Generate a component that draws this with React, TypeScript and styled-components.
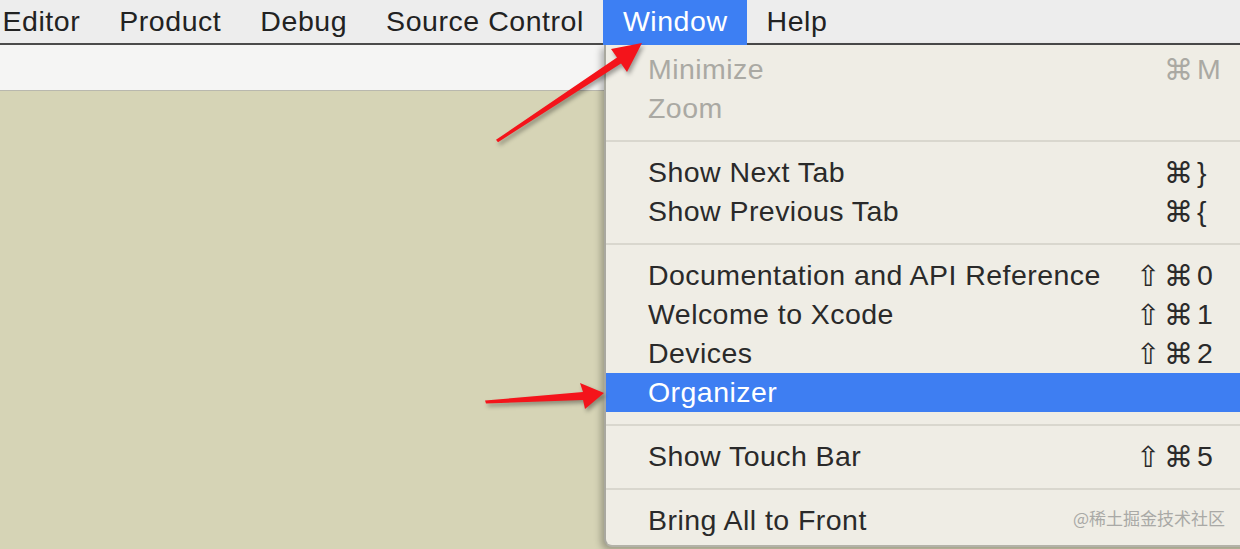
import React from "react";
import styled, { createGlobalStyle } from "styled-components";

const GlobalStyle = createGlobalStyle`
  html, body { margin: 0; padding: 0; background: #d6d4b6; overflow: hidden; }
  * { box-sizing: border-box; }
`;

const FONT = `"Liberation Sans", Arial, Helvetica, sans-serif`;

const Screen = styled.div`
  position: relative;
  width: 1240px;
  height: 549px;
  overflow: hidden;
  display: flex;
  flex-direction: column;
  font-family: ${FONT};
  background: #d6d4b6;
`;

const MenuBar = styled.div`
  height: 45px;
  flex: none;
  display: flex;
  align-items: stretch;
  background: #ededed;
  border-bottom: 2px solid #4b4b4b;
`;

const TitleList = styled.div`
  display: flex;
  margin-left: -17px;
`;

const MenuTitle = styled.div<{ $active?: boolean }>`
  padding: 0 19.5px;
  height: ${(p) => (p.$active ? "45px" : "43px")};
  margin-bottom: ${(p) => (p.$active ? "-2px" : "0")};
  line-height: 42px;
  font-size: 28.5px;
  letter-spacing: 0.55px;
  color: ${(p) => (p.$active ? "#ffffff" : "#222222")};
  background: ${(p) => (p.$active ? "#3d7ff3" : "transparent")};
  position: relative;
  z-index: 2;
  white-space: nowrap;
`;

const Toolbar = styled.div`
  height: 46px;
  flex: none;
  background: #f5f5f4;
  border-bottom: 1px solid #b9b8ae;
`;

const Canvas = styled.div`
  flex: 1;
  background: #d6d4b6;
`;

const Dropdown = styled.div`
  position: absolute;
  left: 604px;
  top: 45px;
  right: -10px;
  bottom: 2px;
  background: #efede5;
  border-left: 2px solid #a9a89f;
  border-bottom: 2px solid #b3b2a8;
  border-bottom-left-radius: 8px;
  box-shadow: -3px 3px 7px rgba(0, 0, 0, 0.28);
  padding: 5px 0 9px;
  display: flex;
  flex-direction: column;
  z-index: 1;
`;

const Item = styled.div<{ $disabled?: boolean; $selected?: boolean }>`
  height: 39px;
  flex: none;
  display: flex;
  align-items: center;
  justify-content: space-between;
  padding: 0 26px 0 42px;
  font-size: 28.5px;
  white-space: nowrap;
  color: ${(p) => (p.$selected ? "#ffffff" : p.$disabled ? "#aaa9a3" : "#2a2a2a")};
  background: ${(p) => (p.$selected ? "#3e7ef2" : "transparent")};
`;

const Label = styled.span`
  letter-spacing: 0.45px;
`;

const Separator = styled.div`
  height: 25px;
  flex: none;
  display: flex;
  align-items: center;
  &::after {
    content: "";
    flex: 1;
    height: 2px;
    background: #d9d7ce;
  }
`;

const Shortcut = styled.span`
  display: flex;
  align-items: center;
`;

const Mods = styled.span`
  text-align: right;
  letter-spacing: 4px;
  font-size: 29px;
`;

const Key = styled.span`
  width: 27px;
  text-align: left;
  padding-left: 0;
`;

const Watermark = styled.div`
  position: absolute;
  right: 15px;
  bottom: 19px;
  font-family: "Noto Sans CJK SC", ${FONT};
  font-size: 17px;
  color: #a9a9a6;
  z-index: 3;
`;

const Overlay = styled.svg`
  position: absolute;
  left: 0;
  top: 0;
  width: 1240px;
  height: 549px;
  pointer-events: none;
  z-index: 4;
  filter: drop-shadow(2px 3px 2px rgba(0, 0, 0, 0.35));
`;

type Entry =
  | { kind: "sep" }
  | { kind: "item"; label: string; mods?: string; key?: string; disabled?: boolean; selected?: boolean };

const entries: Entry[] = [
  { kind: "item", label: "Minimize", mods: "⌘", key: "M", disabled: true },
  { kind: "item", label: "Zoom", disabled: true },
  { kind: "sep" },
  { kind: "item", label: "Show Next Tab", mods: "⌘", key: "}" },
  { kind: "item", label: "Show Previous Tab", mods: "⌘", key: "{" },
  { kind: "sep" },
  { kind: "item", label: "Documentation and API Reference", mods: "⇧⌘", key: "0" },
  { kind: "item", label: "Welcome to Xcode", mods: "⇧⌘", key: "1" },
  { kind: "item", label: "Devices", mods: "⇧⌘", key: "2" },
  { kind: "item", label: "Organizer", selected: true },
  { kind: "sep" },
  { kind: "item", label: "Show Touch Bar", mods: "⇧⌘", key: "5" },
  { kind: "sep" },
  { kind: "item", label: "Bring All to Front" },
];

const titles = ["Editor", "Product", "Debug", "Source Control", "Window", "Help"];

export default function App() {
  return (
    <>
      <GlobalStyle />
      <Screen>
        <MenuBar>
          <TitleList>
            {titles.map((t) => (
              <MenuTitle key={t} $active={t === "Window"}>
                {t}
              </MenuTitle>
            ))}
          </TitleList>
        </MenuBar>
        <Toolbar />
        <Canvas />
        <Dropdown>
          {entries.map((e, i) =>
            e.kind === "sep" ? (
              <Separator key={i} />
            ) : (
              <Item key={i} $disabled={e.disabled} $selected={e.selected}>
                <Label>{e.label}</Label>
                {e.key && (
                  <Shortcut>
                    <Mods>{e.mods}</Mods>
                    <Key>{e.key}</Key>
                  </Shortcut>
                )}
              </Item>
            )
          )}
        </Dropdown>
        <Watermark>@稀土掘金技术社区</Watermark>
        <Overlay viewBox="0 0 1240 549">
          <polygon
            fill="#f4141b"
            points="496,139.8 617,57.6 611,49 642,43 627,72 621,63.4 498,142.2"
          />
          <polygon
            fill="#f4141b"
            points="485,400.5 583,392 580,383 604,393 585,409 583,400 486,403.5"
          />
        </Overlay>
      </Screen>
    </>
  );
}
